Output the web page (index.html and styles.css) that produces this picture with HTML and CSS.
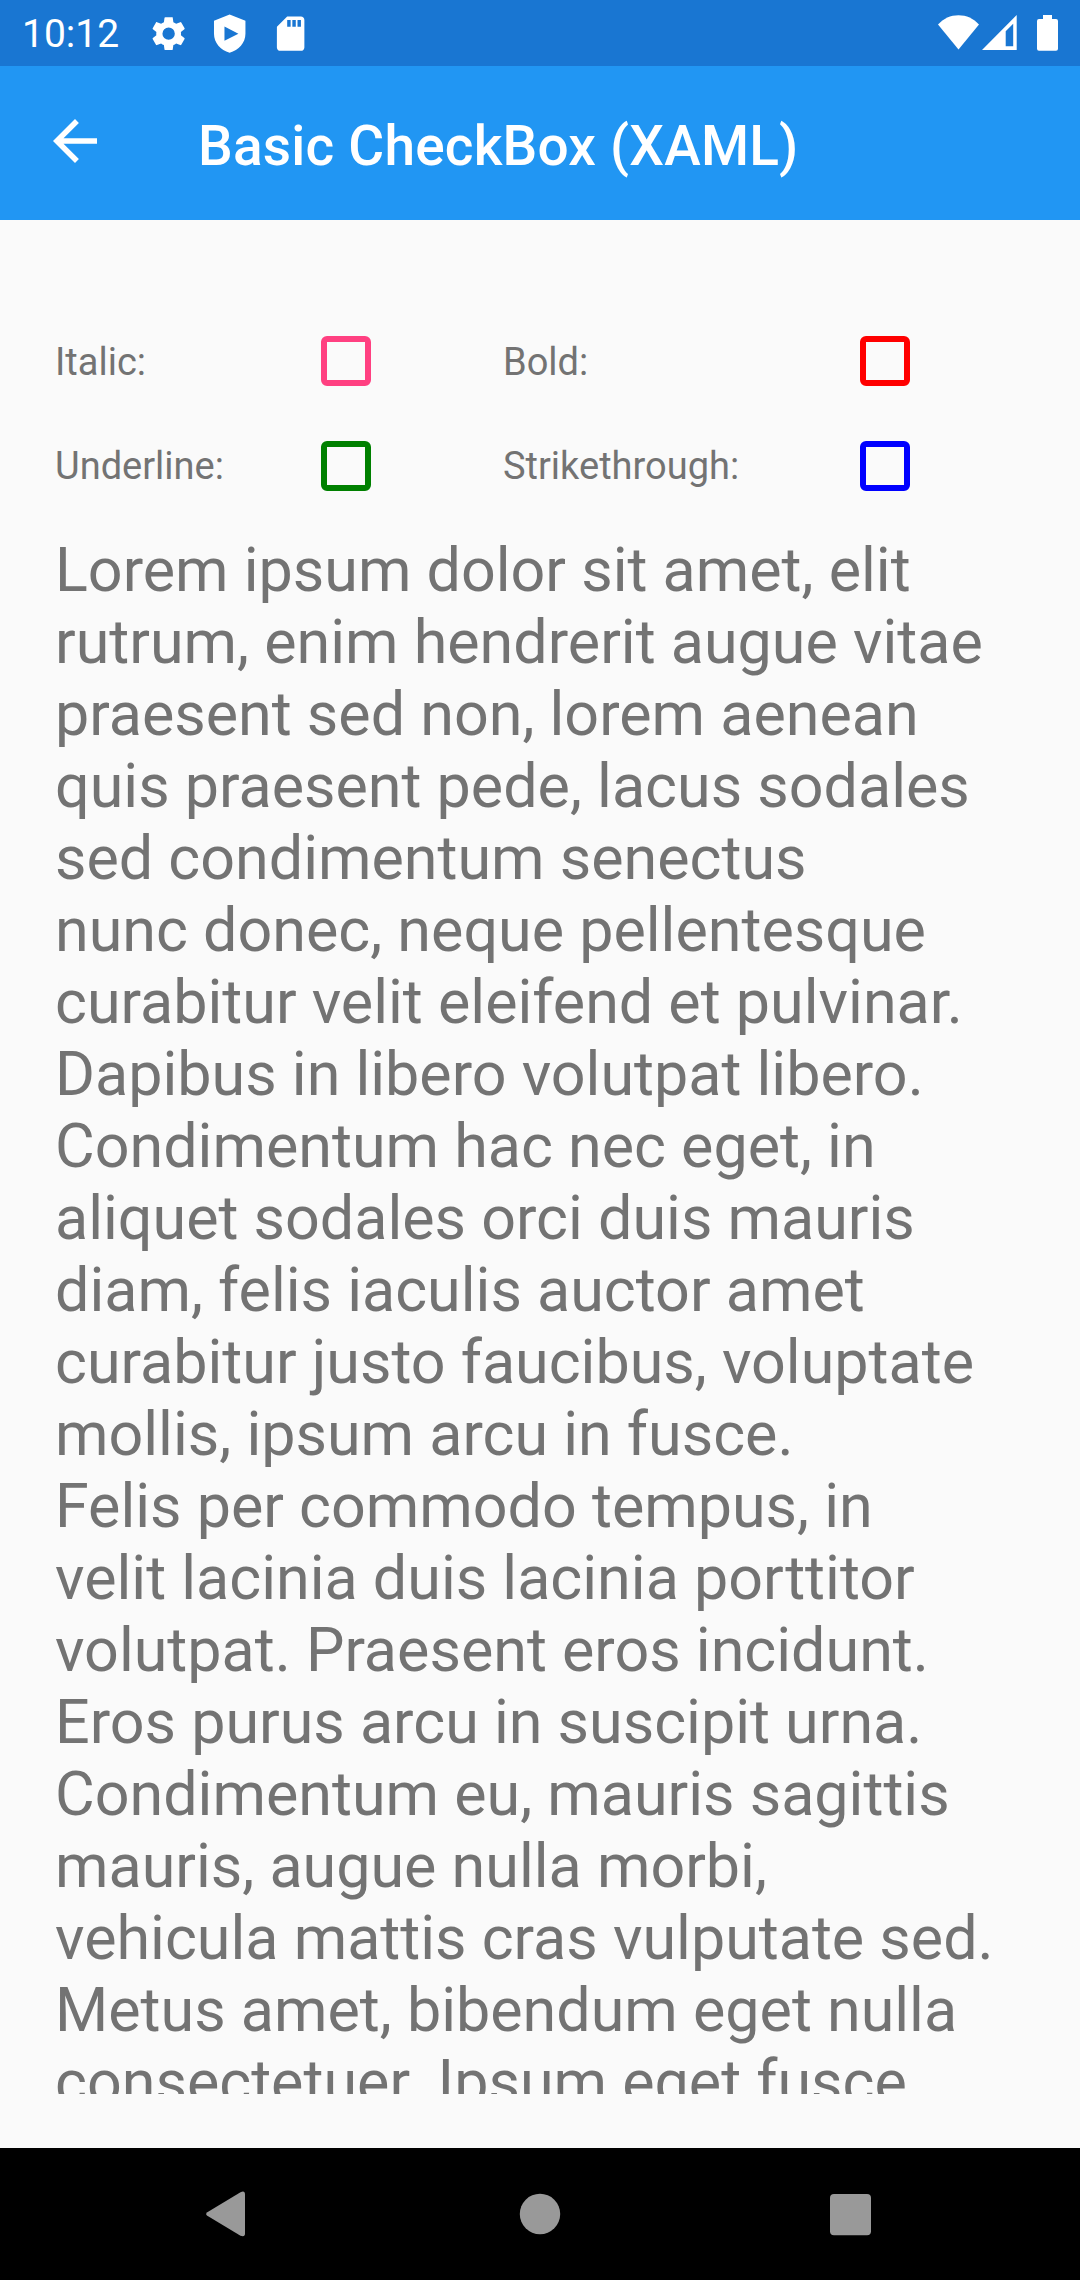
FILE: index.html
```html
<!DOCTYPE html>
<html lang="en">
<head>
<meta charset="utf-8">
<title>Basic CheckBox (XAML)</title>
<link rel="stylesheet" href="styles.css">
</head>
<body>
<div class="screen">
  <div class="status-bar">
    <span class="clock">10:12</span>
    <div class="status-icons">
      <svg class="status-icon" viewBox="0 0 24 24"><path d="M19.14 12.94c.04-.3.06-.61.06-.94 0-.32-.02-.64-.07-.94l2.03-1.58a.49.49 0 0 0 .12-.61l-1.92-3.32a.488.488 0 0 0-.59-.22l-2.39.96c-.5-.38-1.03-.7-1.62-.94l-.36-2.54a.484.484 0 0 0-.48-.41h-3.84c-.24 0-.43.17-.47.41l-.36 2.54c-.59.24-1.13.57-1.62.94l-2.39-.96c-.22-.08-.47 0-.59.22L2.74 8.87c-.12.21-.08.47.12.61l2.03 1.58c-.05.3-.09.63-.09.94s.02.64.07.94l-2.03 1.58a.49.49 0 0 0-.12.61l1.92 3.32c.12.22.37.29.59.22l2.39-.96c.5.38 1.03.7 1.62.94l.36 2.54c.05.24.24.41.48.41h3.84c.24 0 .44-.17.47-.41l.36-2.54c.59-.24 1.13-.56 1.62-.94l2.39.96c.22.08.47 0 .59-.22l1.92-3.32c.12-.22.07-.47-.12-.61l-2.01-1.58zM12 15.6A3.6 3.6 0 1 1 12 8.4a3.6 3.6 0 0 1 0 7.2z"/></svg>
      <svg class="status-icon" viewBox="0 0 24 24"><path fill-rule="evenodd" d="M12 .9L2.9 4.5v7.5C2.9 17.3 6.7 21.5 12 23.1C17.3 21.5 21.2 17.3 21.2 12V4.5zM9 7.9V16.1L17.1 12z"/></svg>
      <svg class="status-icon" viewBox="0 0 24 24"><path d="M18 2h-8L4.020 8 4 20c0 1.100.9 2 2 2h12c1.100 0 2-.9 2-2V4c0-1.100-.9-2-2-2zm-6 6h-2V4h2v4zm3 0h-2V4h2v4zm3 0h-2V4h2v4z"/></svg>
    </div>
    <div class="system-icons">
      <svg class="wifi" viewBox="0 0 41 35"><path d="M20.5 34.5L0 9.5C5.5 3.4 12.5.2 20.5.2S35.5 3.4 41 9.5z"/></svg>
      <svg class="signal" viewBox="0 0 35 35"><path fill-rule="evenodd" d="M0 35L34.700 0V35zM23.700 16.300V31.200H31.200V8.800z"/></svg>
      <svg class="battery" viewBox="0 0 21 36"><path d="M6 0h9v4h4a2 2 0 0 1 2 2v27.700a2 2 0 0 1-2 2H2a2 2 0 0 1-2-2V6a2 2 0 0 1 2-2h4z"/></svg>
    </div>
  </div>
  <header class="toolbar">
    <svg class="back" viewBox="0 0 24 24"><path d="M20 11H7.830l5.590-5.590L12 4l-8 8 8 8 1.410-1.410L7.830 13H20z"/></svg>
    <h1 class="title">Basic CheckBox (XAML)</h1>
  </header>
  <main class="content">
    <div class="options">
      <span class="label first-row">Italic:</span><span class="box pink"></span>
      <span class="label first-row">Bold:</span><span class="box red"></span>
      <span class="label">Underline:</span><span class="box green"></span>
      <span class="label">Strikethrough:</span><span class="box blue"></span>
    </div>
    <p class="sample">Lorem ipsum dolor sit amet, elit<br>rutrum, enim hendrerit augue vitae<br>praesent sed non, lorem aenean<br>quis praesent pede, lacus sodales<br>sed condimentum senectus<br>nunc donec, neque pellentesque<br>curabitur velit eleifend et pulvinar.<br>Dapibus in libero volutpat libero.<br>Condimentum hac nec eget, in<br>aliquet sodales orci duis mauris<br>diam, felis iaculis auctor amet<br>curabitur justo faucibus, voluptate<br>mollis, ipsum arcu in fusce.<br>Felis per commodo tempus, in<br>velit lacinia duis lacinia porttitor<br>volutpat. Praesent eros incidunt.<br>Eros purus arcu in suscipit urna.<br>Condimentum eu, mauris sagittis<br>mauris, augue nulla morbi,<br>vehicula mattis cras vulputate sed.<br>Metus amet, bibendum eget nulla<br>consectetuer. Ipsum eget fusce</p>
  </main>
  <nav class="nav-bar">
    <svg class="nav-icon" viewBox="0 0 44 46"><path d="M3.300 21.200L36.500 1.300Q41 -.8 41 3.500V42.500Q41 46.300 36.500 44.700L3.300 24.800Q1 23 3.300 21.200z"/></svg>
    <svg class="nav-icon" viewBox="0 0 44 46"><circle cx="23" cy="23" r="20.200"/></svg>
    <svg class="nav-icon" viewBox="0 0 44 46"><rect x="1" y="3" width="41" height="41.300" rx="4"/></svg>
  </nav>
</div>
</body>
</html>
```

FILE: styles.css
```css
* { box-sizing: border-box; }

body {
  margin: 0;
  font-family: Roboto, sans-serif;
  background: #fafafa;
}

.screen {
  display: flex;
  flex-direction: column;
  width: 1080px;
  height: 2280px;
  overflow: hidden;
}

.status-bar {
  display: flex;
  align-items: flex-start;
  height: 66px;
  padding: 0 22px;
  background: #1976d2;
  color: #fff;
  fill: currentColor;
}

.clock {
  width: 125.7px;
  padding-top: 11px;
  font-size: 39px;
  line-height: 46px;
}

.status-icons {
  display: flex;
  gap: 19.7px;
  padding-top: 12.7px;
}

.status-icon { width: 41.25px; height: 41.25px; }

.system-icons {
  display: flex;
  margin-left: auto;
  padding-top: 15px;
}

.wifi { width: 41px; height: 35px; margin-right: 3px; }
.signal { width: 35px; height: 35px; margin-right: 20px; }
.battery { width: 21px; height: 36px; }

.toolbar {
  display: flex;
  height: 154px;
  padding-left: 42px;
  background: #2196f3;
  color: #fff;
}

.back {
  width: 66px;
  height: 66px;
  margin-top: 42.3px;
  fill: currentColor;
}

.title {
  margin: 48px 0 0 90px;
  font-size: 55px;
  font-weight: 500;
  line-height: 64px;
  letter-spacing: 0.2px;
}

.content {
  display: flex;
  flex-direction: column;
  flex: 1;
  min-height: 0;
  padding: 88px 55px 54px;
  color: #737373;
}

.options {
  display: grid;
  grid-template-columns: 266px 182px 357px 50px;
  grid-auto-rows: 105px;
  align-items: center;
}

.label {
  font-size: 38px;
  line-height: 46px;
}

.first-row { padding-top: 2px; }

.box {
  width: 50px;
  height: 50px;
  border: 6px solid;
  border-radius: 6px;
}

.pink { color: #ff4081; }
.red { color: #f00; }
.green { color: #008000; }
.blue { color: #00f; }

.sample {
  flex: 1;
  min-height: 0;
  margin: 0;
  padding-top: 16px;
  overflow: hidden;
  font-size: 61px;
  line-height: 72px;
  white-space: nowrap;
}

.nav-bar {
  display: flex;
  justify-content: space-between;
  height: 132px;
  padding: 43px 207px 0 204px;
  background: #000;
  fill: #999;
}

.nav-icon { width: 44px; height: 46px; }
```
